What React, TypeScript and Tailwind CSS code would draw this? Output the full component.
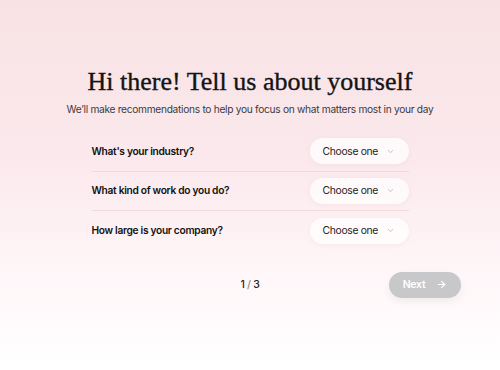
import { ChevronDown, ArrowRight } from 'lucide-react';

const questions = ["What's your industry?", 'What kind of work do you do?', 'How large is your company?'];

export default function App() {
  return (
    <div
      className="w-[500px] h-[370px] overflow-hidden bg-[linear-gradient(180deg,#f8e2e4_0%,#fbe9ed_45%,#fff7f9_75%,#ffffff_100%)] flex flex-col items-center tracking-[-0.3px]"
      style={{ fontFamily: 'Inter, "Noto Sans", sans-serif' }}
    >
      <h1
        className="mt-[66px] text-[26px] leading-[32px] text-[#141414] tracking-normal [-webkit-text-stroke:0.35px_#141414]"
        style={{ fontFamily: '"Liberation Serif", "DejaVu Serif", serif' }}
      >
        Hi there! Tell us about yourself
      </h1>
      <p className="mt-[4px] text-[10.2px] leading-[14px] text-[#3a3a3a]">
        We’ll make recommendations to help you focus on what matters most in your day
      </p>

      <div className="mt-[16px] w-[317px] flex flex-col">
        {questions.map((q, i) => (
          <div
            key={q}
            className={`flex items-center justify-between h-[39.5px] ${i < questions.length - 1 ? 'border-b border-[#f0dadd]' : ''}`}
          >
            <span className="text-[10.2px] font-semibold text-[#111]">{q}</span>
            <button className="h-[26px] w-[99px] rounded-full bg-white/75 shadow-[0_1px_4px_rgba(240,200,205,0.25)] flex items-center pl-[13px] pr-[14px] justify-between">
              <span className="text-[10.3px] text-[#222]">Choose one</span>
              <ChevronDown size={9} strokeWidth={1.5} className="text-[#999]" />
            </button>
          </div>
        ))}
      </div>

      <div className="mt-[21px] w-full relative flex justify-center items-center h-[26px]">
        <span className="text-[10.5px] font-medium text-[#222]">
          1 <span className="text-[#888]">/</span> 3
        </span>
        <button className="absolute left-[389px] top-0 h-[26px] w-[72px] rounded-full bg-[#c8c8ca] shadow-[0_4px_10px_rgba(0,0,0,0.06)] flex items-center justify-center gap-[11px] text-white text-[10.5px] font-semibold">
          Next
          <ArrowRight size={11} strokeWidth={2.5} />
        </button>
      </div>
    </div>
  );
}
